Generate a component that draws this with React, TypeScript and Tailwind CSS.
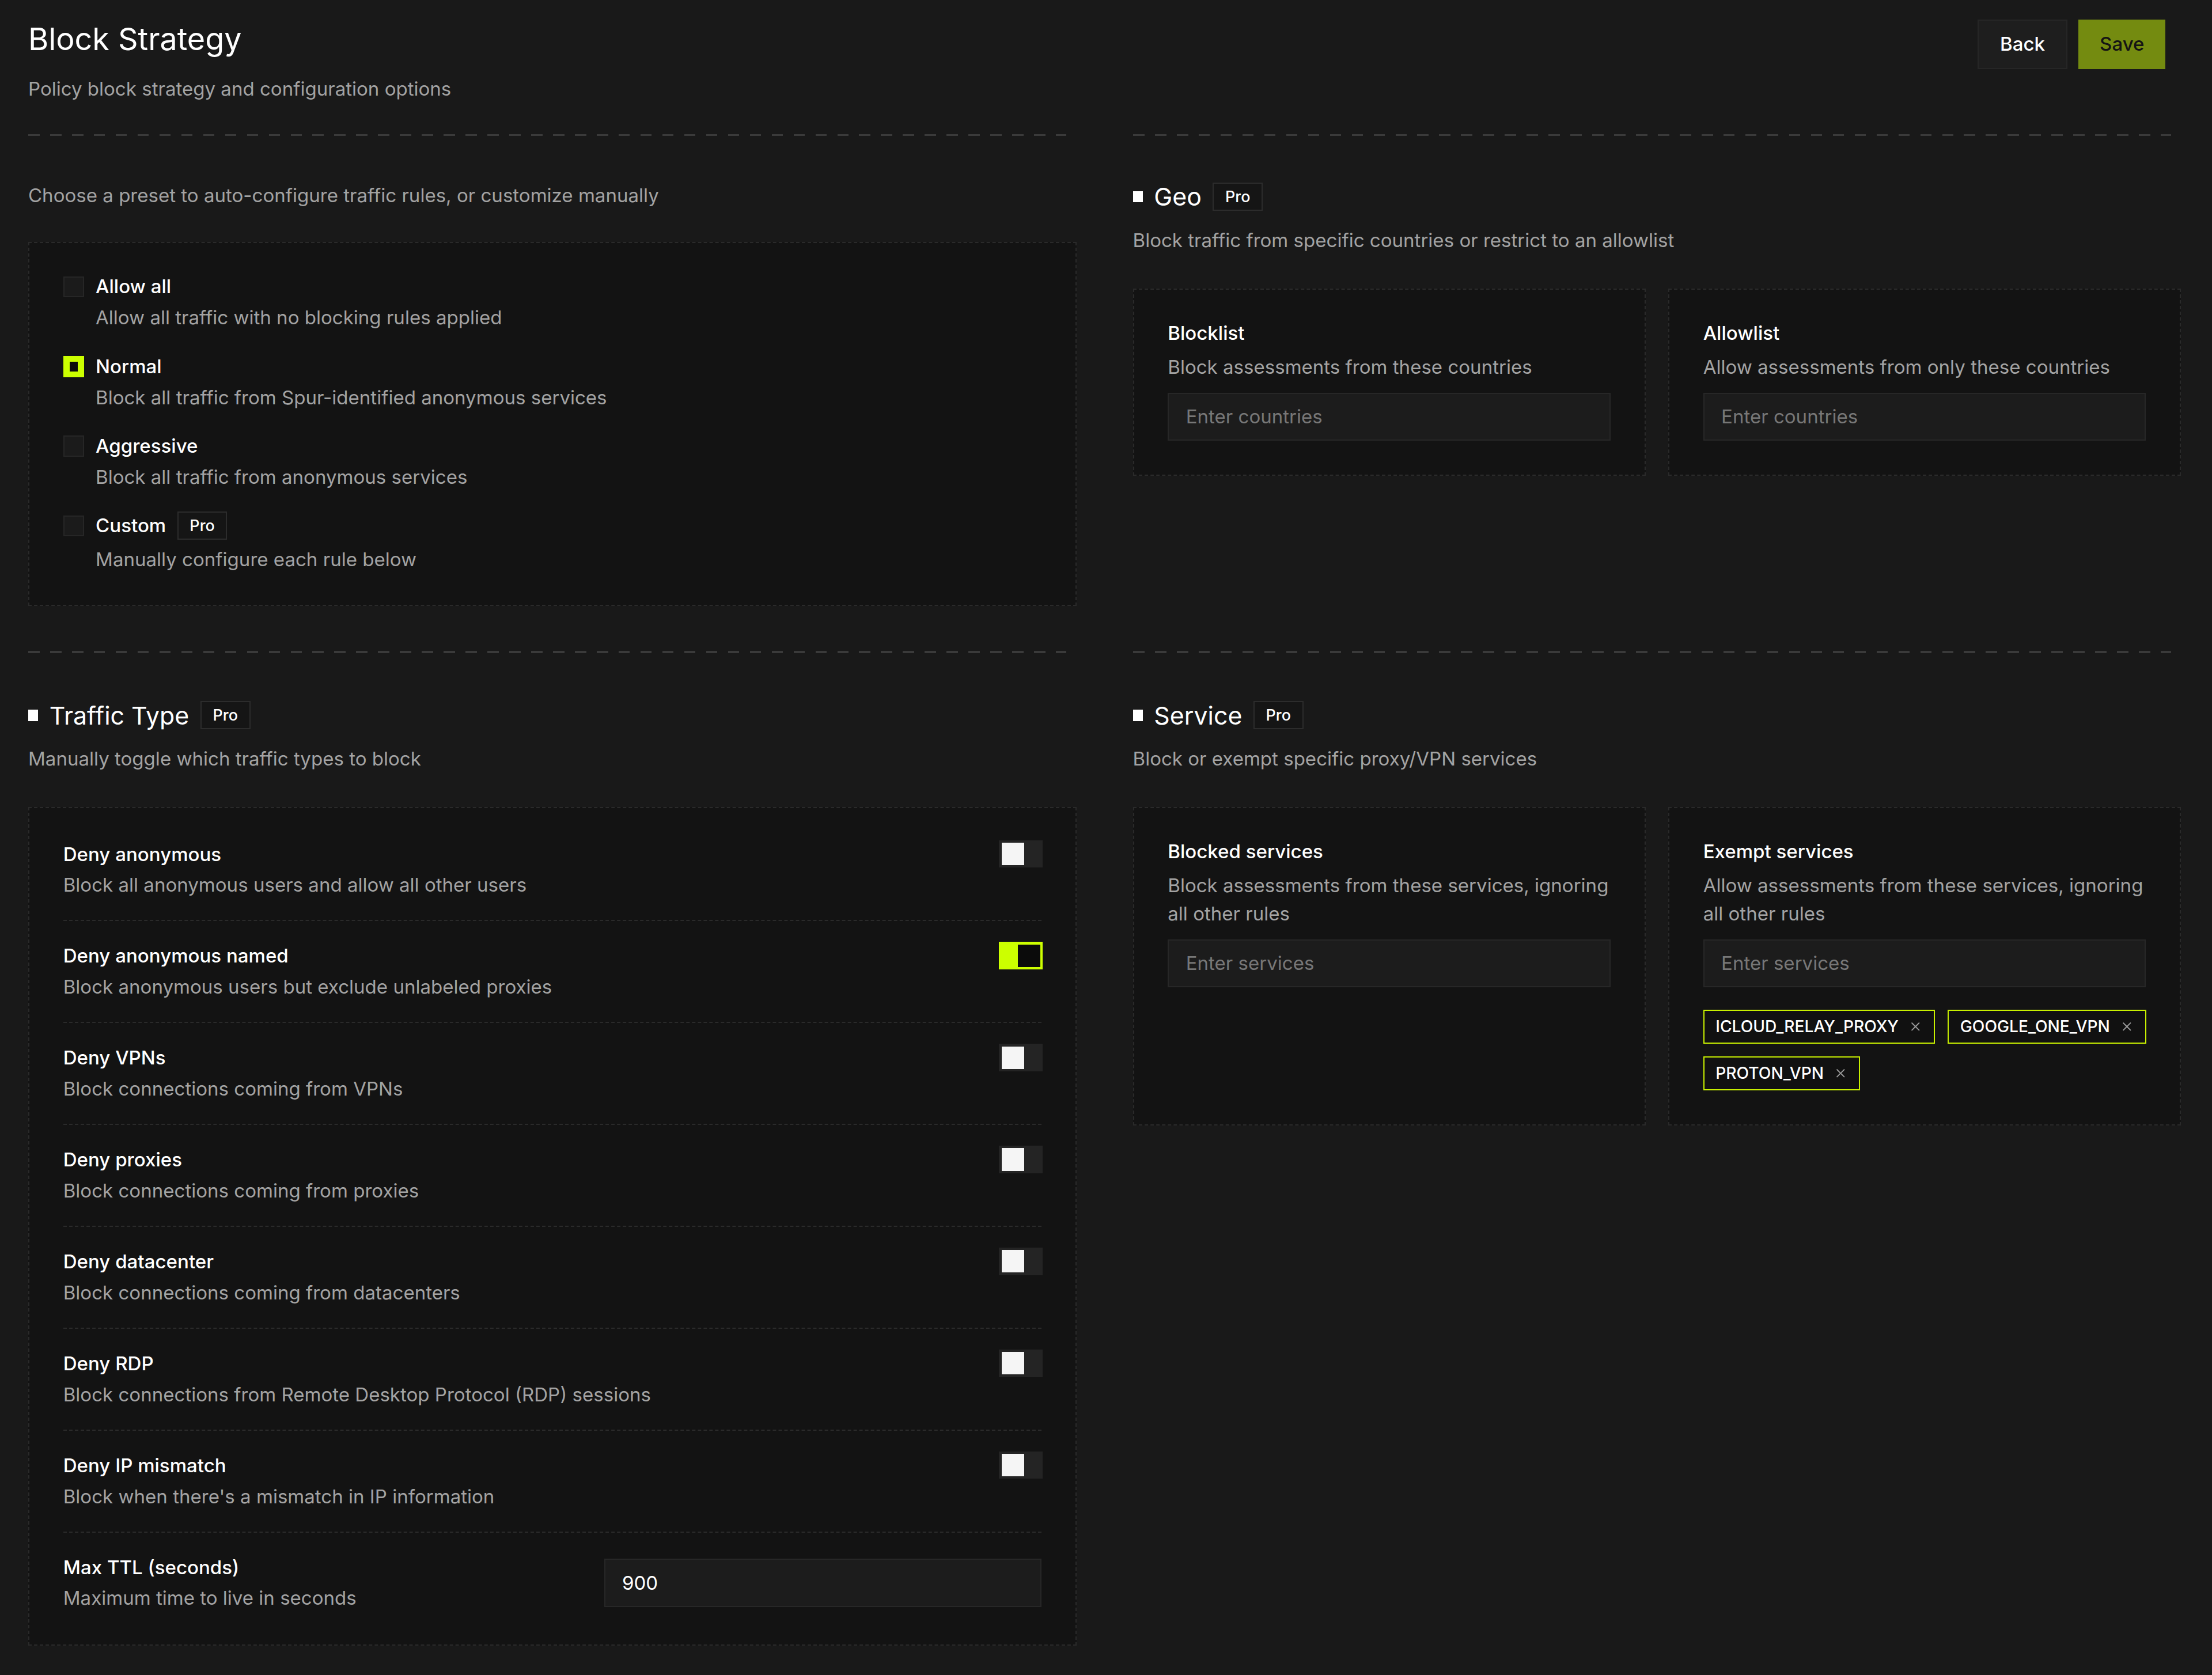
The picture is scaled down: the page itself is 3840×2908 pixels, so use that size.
import React from "react";
import clsx from "clsx";
import { X } from "lucide-react";

type Rule = { label: string; hint: string; on?: boolean };

const presets = [
  { label: "Allow all", hint: "Allow all traffic with no blocking rules applied" },
  { label: "Normal", hint: "Block all traffic from Spur-identified anonymous services", checked: true },
  { label: "Aggressive", hint: "Block all traffic from anonymous services" },
  { label: "Custom", hint: "Manually configure each rule below", pro: true },
];

const rules: Rule[] = [
  { label: "Deny anonymous", hint: "Block all anonymous users and allow all other users" },
  { label: "Deny anonymous named", hint: "Block anonymous users but exclude unlabeled proxies", on: true },
  { label: "Deny VPNs", hint: "Block connections coming from VPNs" },
  { label: "Deny proxies", hint: "Block connections coming from proxies" },
  { label: "Deny datacenter", hint: "Block connections coming from datacenters" },
  { label: "Deny RDP", hint: "Block connections from Remote Desktop Protocol (RDP) sessions" },
  { label: "Deny IP mismatch", hint: "Block when there's a mismatch in IP information" },
];

const exempt = ["ICLOUD_RELAY_PROXY", "GOOGLE_ONE_VPN", "PROTON_VPN"];

const ProBadge = () => (
  <span className="flex h-[20px] items-center border border-[#2c2c2c] bg-[#151515] px-2 text-[11px] font-medium leading-none text-white">
    Pro
  </span>
);

const Dashes = () => (
  <div className="mr-[7px] h-[1.5px] bg-[repeating-linear-gradient(to_right,#3a3a3a_0_8px,transparent_8px_15.5px)]" />
);

const Check = ({ on }: { on?: boolean }) =>
  on ? (
    <span className="mt-[2.5px] flex size-[15px] shrink-0 items-center justify-center bg-[#ccff00]">
      <span className="h-[7px] w-[6px] bg-[#0b0b0b]" />
    </span>
  ) : (
    <span className="mt-[2.5px] size-[15px] shrink-0 border border-[#262626] bg-[#1b1b1b]" />
  );

const Toggle = ({ on }: { on?: boolean }) => (
  <span
    className={clsx(
      "mr-[-1px] mt-[0px] flex h-[19.5px] w-[31px] shrink-0 items-center p-[1.8px]",
      on ? "justify-end bg-[#ccff00]" : "bg-[#242424]"
    )}
  >
    <span className={clsx("size-[16px]", on ? "bg-[#0b0b0b]" : "bg-[#f5f5f5]")} />
  </span>
);

const TextInput = ({ placeholder, value }: { placeholder?: string; value?: string }) => (
  <input
    readOnly
    defaultValue={value}
    placeholder={placeholder}
    className="h-[34px] w-full border border-[#272727] bg-[#1c1c1c] px-3 text-[13.5px] text-white outline-none placeholder:text-[#777]"
  />
);

const SectionHead = ({ title, hint }: { title: string; hint: string }) => (
  <div>
    <div className="flex h-7 items-center gap-2">
      <span className="h-[8px] w-[7px] bg-white" />
      <span className="text-[17.5px] leading-7 text-white">{title}</span>
      <ProBadge />
    </div>
    <p className="mt-[7px] text-[13.5px] leading-5 text-[#a3a3a3]">{hint}</p>
  </div>
);

const Card = ({ title, hint, children }: { title: string; hint: string; children: React.ReactNode }) => (
  <div className="border border-dashed border-[#2a2a2a] bg-[#131313] px-6 pb-6 pt-[21px]">
    <h3 className="text-[13.5px] font-medium leading-5 text-white">{title}</h3>
    <p className="mt-1 text-[13.5px] leading-5 text-[#a3a3a3]">{hint}</p>
    <div className="mt-2">{children}</div>
  </div>
);

export default function App() {
  return (
    <div className="min-h-screen bg-[#191919] text-white [font-family:Inter,sans-serif]">
      <div className="pb-5 pl-5 pr-[22px] pt-[14px] [zoom:2.449]">
        {/* page header */}
        <header className="flex items-start justify-between pr-[11px]">
          <div>
            <h1 className="text-[22px] leading-7 text-white">Block Strategy</h1>
            <p className="mt-[11px] text-[13.5px] leading-5 text-[#a3a3a3]">
              Policy block strategy and configuration options
            </p>
          </div>
          <div className="flex gap-2">
            <button className="h-[35px] border border-[#262626] bg-[#1e1e1e] px-[15px] text-[13.5px] font-medium text-white">
              Back
            </button>
            <button className="h-[35px] bg-[#748b10] px-[15px] text-[13.5px] font-medium text-[#141414]">Save</button>
          </div>
        </header>

        <div className="mt-[22px] grid grid-cols-2 gap-x-10 gap-y-8">
          {/* presets */}
          <section>
            <Dashes />
            <p className="mt-[32px] text-[13.5px] leading-5 text-[#a3a3a3]">
              Choose a preset to auto-configure traffic rules, or customize manually
            </p>
            <div className="mt-[23px] flex flex-col gap-[14.5px] border border-dashed border-[#2a2a2a] bg-[#131313] px-6 pb-[22px] pt-[21px]">
              {presets.map((p) => (
                <div key={p.label} className="flex items-start gap-2">
                  <Check on={p.checked} />
                  <div className={clsx("flex flex-col", p.pro ? "gap-[4px]" : "gap-[2px]")}>
                    <div className="flex h-5 items-center gap-2">
                      <span className="text-[13.5px] font-medium leading-5 text-white">{p.label}</span>
                      {p.pro && <ProBadge />}
                    </div>
                    <span className="text-[13.5px] leading-5 text-[#a3a3a3]">{p.hint}</span>
                  </div>
                </div>
              ))}
            </div>
          </section>

          {/* geo */}
          <section>
            <Dashes />
            <div className="mt-[29px]">
              <SectionHead title="Geo" hint="Block traffic from specific countries or restrict to an allowlist" />
            </div>
            <div className="mt-6 grid grid-cols-2 gap-4">
              <Card title="Blocklist" hint="Block assessments from these countries">
                <TextInput placeholder="Enter countries" />
              </Card>
              <Card title="Allowlist" hint="Allow assessments from only these countries">
                <TextInput placeholder="Enter countries" />
              </Card>
            </div>
          </section>

          {/* traffic type */}
          <section>
            <Dashes />
            <div className="mt-[30px]">
              <SectionHead title="Traffic Type" hint="Manually toggle which traffic types to block" />
            </div>
            <div className="mt-6 border border-dashed border-[#2a2a2a] bg-[#131313] px-6 py-2">
              {rules.map((r) => (
                <div
                  key={r.label}
                  className="flex items-start justify-between border-b border-dashed border-[#2a2a2a] py-[14.7px]"
                >
                  <div className="flex flex-col gap-[2px]">
                    <span className="text-[13.5px] font-medium leading-5 text-white">{r.label}</span>
                    <span className="text-[13.5px] leading-5 text-[#a3a3a3]">{r.hint}</span>
                  </div>
                  <Toggle on={r.on} />
                </div>
              ))}
              <div className="flex items-center justify-between py-[14.7px]">
                <div className="flex flex-col gap-[2px]">
                  <span className="text-[13.5px] font-medium leading-5 text-white">Max TTL (seconds)</span>
                  <span className="text-[13.5px] leading-5 text-[#a3a3a3]">Maximum time to live in seconds</span>
                </div>
                <div className="w-[310px]">
                  <TextInput value="900" />
                </div>
              </div>
            </div>
          </section>

          {/* service */}
          <section>
            <Dashes />
            <div className="mt-[30px]">
              <SectionHead title="Service" hint="Block or exempt specific proxy/VPN services" />
            </div>
            <div className="mt-6 grid grid-cols-2 gap-4">
              <Card title="Blocked services" hint="Block assessments from these services, ignoring all other rules">
                <TextInput placeholder="Enter services" />
              </Card>
              <Card title="Exempt services" hint="Allow assessments from these services, ignoring all other rules">
                <TextInput placeholder="Enter services" />
                <div className="mr-[-8px] mt-4 flex flex-wrap gap-[9px]">
                  {exempt.map((t) => (
                    <span
                      key={t}
                      className="flex h-6 items-center gap-[7px] border border-[#c8f000] bg-[#111] pl-2 pr-[8px] text-[11.5px] font-medium text-white"
                    >
                      {t}
                      <X size={10} strokeWidth={2} className="text-[#9a9a9a]" />
                    </span>
                  ))}
                </div>
              </Card>
            </div>
          </section>
        </div>
      </div>
    </div>
  );
}
